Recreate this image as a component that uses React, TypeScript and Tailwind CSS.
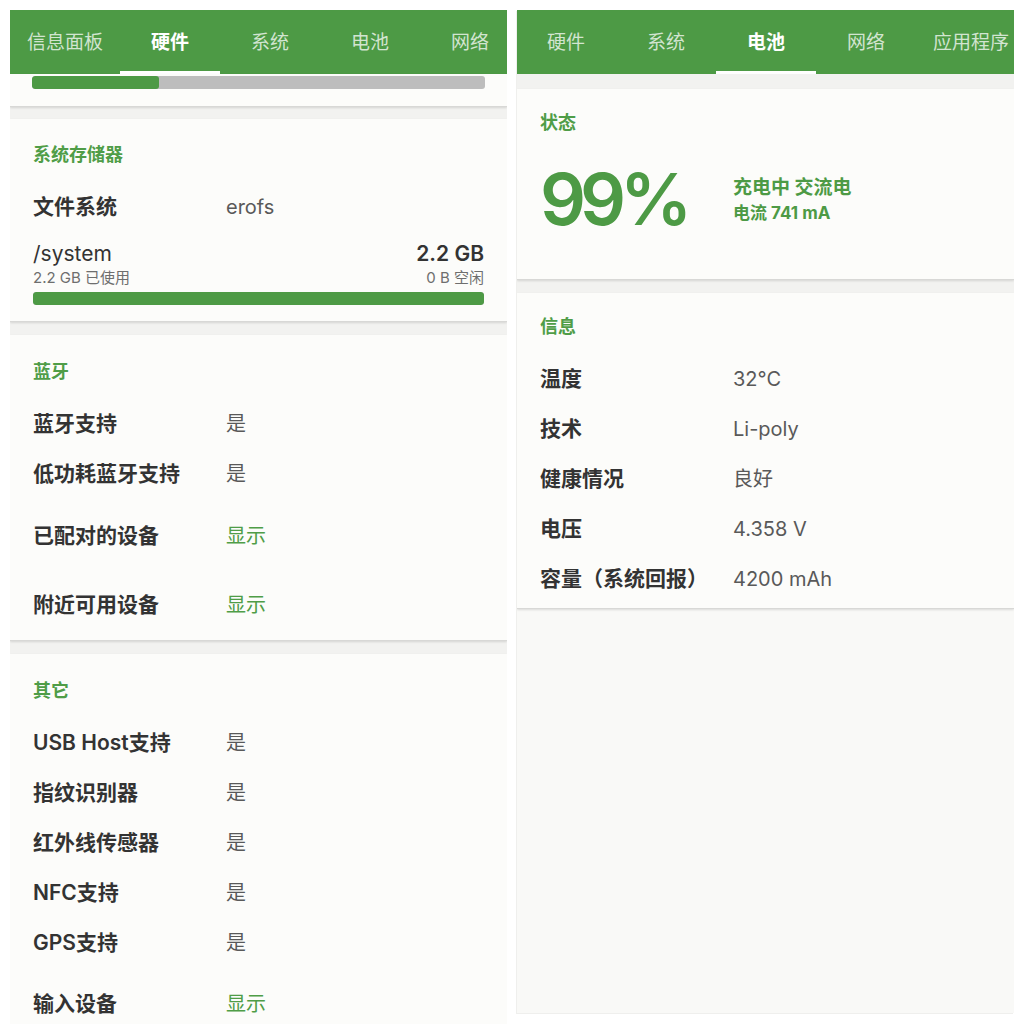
import React from "react";

const font = { fontFamily: '"Inter", "Noto Sans CJK SC", sans-serif' };

type Tab = { label: string; wide?: boolean; active?: boolean };

const leftTabs: Tab[] = [
  { label: "信息面板", wide: true },
  { label: "硬件", active: true },
  { label: "系统" },
  { label: "电池" },
  { label: "网络" },
];

const rightTabs: Tab[] = [
  { label: "硬件" },
  { label: "系统" },
  { label: "电池", active: true },
  { label: "网络" },
  { label: "应用程序", wide: true },
];

function TabBar({ tabs, shift }: { tabs: Tab[]; shift?: string }) {
  return (
    <div className={`flex h-[64px] shrink-0 overflow-hidden bg-[#4d9a45] ${shift ?? ""}`}>
      {tabs.map((t) => (
        <div
          key={t.label}
          className={`relative flex h-full shrink-0 items-center justify-center pt-[2px] text-[19px] ${
            t.wide ? "w-[110px]" : "w-[100px]"
          } ${t.active ? "font-bold text-white" : "text-white/75"}`}
        >
          {t.label}
          {t.active && <div className="absolute bottom-0 left-0 right-0 h-[3px] bg-white" />}
        </div>
      ))}
    </div>
  );
}

function Band({ h = "h-[13px]" }: { h?: string }) {
  return <div className={`${h} shrink-0 bg-[#f2f2f0]`} />;
}

function Card({ className, children }: { className: string; children: React.ReactNode }) {
  return (
    <div
      className={`relative z-10 shrink-0 border-b border-[#d8d8d6] bg-[#fcfcfa] px-[23px] shadow-[0_1px_2px_rgba(0,0,0,0.12)] ${className}`}
    >
      {children}
    </div>
  );
}

function Title({ children }: { children: React.ReactNode }) {
  return <div className="mb-[14px] h-[24px] text-[18px] font-bold leading-[24px] text-[#4f9d47]">{children}</div>;
}

function Row({
  label,
  value,
  link,
  h = "h-[50px]",
}: {
  label: string;
  value: string;
  link?: boolean;
  h?: string;
}) {
  return (
    <div className={`flex items-center pt-[2px] ${h}`}>
      <div className="w-[193px] shrink-0 text-[21px] font-semibold text-[#333333]">{label}</div>
      <div className={`text-[20px] ${link ? "text-[#4f9d47]" : "text-[#595959]"}`}>{value}</div>
    </div>
  );
}

function Bar({ pct }: { pct: string }) {
  return (
    <div className="h-[13px] w-full overflow-hidden rounded-[3px] bg-[#bdbdbd]">
      <div className={`h-full rounded-[3px] bg-[#4d9a45] ${pct}`} />
    </div>
  );
}

function HardwarePanel() {
  return (
    <div className="flex h-[1014px] w-[497px] shrink-0 flex-col overflow-hidden bg-[#f2f2f0]">
      <TabBar tabs={leftTabs} />

      {/* scrolled-off card, only its bar shows */}
      <Card className="pb-[17px] pt-[2px] !px-[22px]">
        <Bar pct="w-[28%]" />
      </Card>
      <Band h="h-[12px]" />

      <Card className="pb-[16px] pt-[24px]">
        <Title>系统存储器</Title>
        <Row label="文件系统" value="erofs" />
        <div className="pt-[9px]">
          <div className="flex h-[28px] items-center justify-between text-[21px] text-[#333333]">
            <span>/system</span>
            <span className="font-semibold">2.2 GB</span>
          </div>
          <div className="flex h-[20px] items-center justify-between text-[15px] text-[#6e6e6e]">
            <span>2.2 GB 已使用</span>
            <span>0 B 空闲</span>
          </div>
          <div className="mt-[4px]">
            <Bar pct="w-full" />
          </div>
        </div>
      </Card>
      <Band />

      <Card className="pb-[5px] pt-[25px]">
        <Title>蓝牙</Title>
        <Row label="蓝牙支持" value="是" />
        <Row label="低功耗蓝牙支持" value="是" />
        <Row label="已配对的设备" value="显示" link h="h-[74px]" />
        <Row label="附近可用设备" value="显示" link h="h-[63px]" />
      </Card>
      <Band />

      <Card className="pb-[5px] pt-[25px]">
        <Title>其它</Title>
        <Row label="USB Host支持" value="是" />
        <Row label="指纹识别器" value="是" />
        <Row label="红外线传感器" value="是" />
        <Row label="NFC支持" value="是" />
        <Row label="GPS支持" value="是" />
        <Row label="输入设备" value="显示" link h="h-[72px]" />
      </Card>
    </div>
  );
}

function BatteryPanel() {
  return (
    <div className="flex h-[1003px] w-[497px] shrink-0 flex-col overflow-hidden bg-[#f9f9f7] shadow-[-1px_1px_0_#efefed]">
      <TabBar tabs={rightTabs} shift="-ml-[1px]" />
      <Band h="h-[15px]" />

      <Card className="pb-[30px] pt-[22px]">
        <Title>状态</Title>
        <div className="flex h-[100px] items-center">
          <div className="w-[193px] shrink-0 text-[72px] font-semibold leading-none tracking-[-6px] text-[#4d9a45]">
            99%
          </div>
          <div className="flex flex-col text-[#4d9a45]">
            <span className="text-[19px] font-bold leading-[27px]">充电中 交流电</span>
            <span className="text-[17px] font-bold leading-[24px]">电流 741 mA</span>
          </div>
        </div>
      </Card>
      <Band />

      <Card className="pb-[5px] pt-[22px]">
        <Title>信息</Title>
        <Row label="温度" value="32°C" />
        <Row label="技术" value="Li-poly" />
        <Row label="健康情况" value="良好" />
        <Row label="电压" value="4.358 V" />
        <Row label="容量（系统回报）" value="4200 mAh" />
      </Card>

      <div className="flex-1 bg-[#f9f9f7]" />
    </div>
  );
}

export default function App() {
  return (
    <div className="flex h-[1024px] w-[1024px] gap-[10px] overflow-hidden bg-white pl-[10px] pt-[10px]" style={font}>
      <HardwarePanel />
      <BatteryPanel />
    </div>
  );
}
